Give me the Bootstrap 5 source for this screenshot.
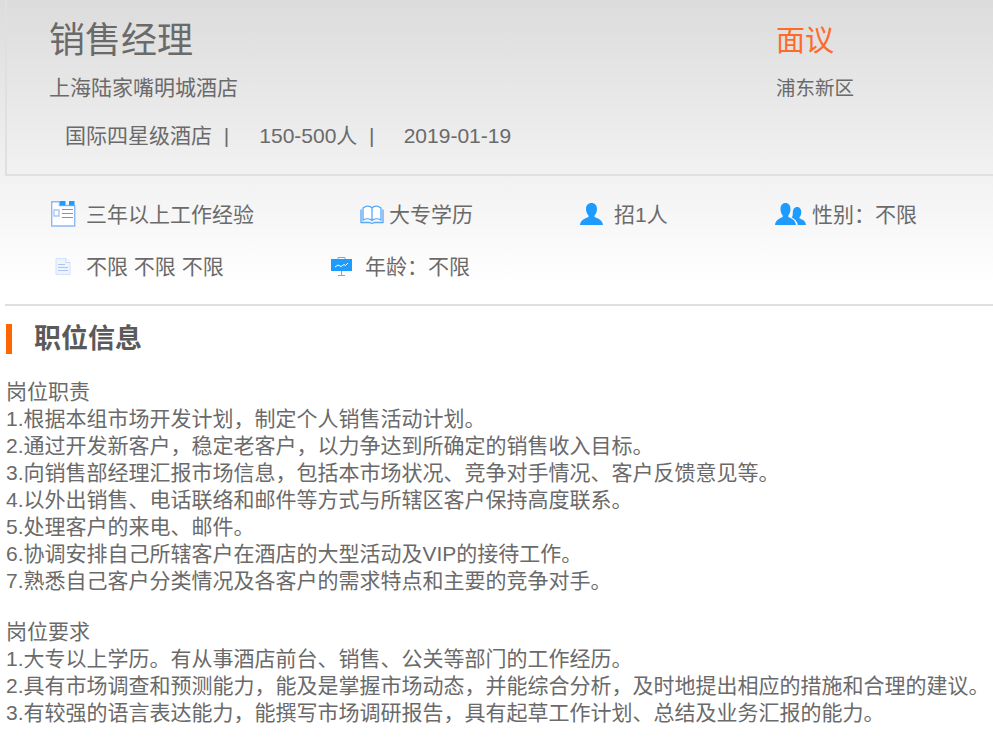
<!DOCTYPE html>
<html lang="zh-CN">
<head>
<meta charset="utf-8">
<title>销售经理</title>
<link rel="stylesheet" href="https://cdn.jsdelivr.net/npm/bootstrap@5.3.0/dist/css/bootstrap.min.css">
<style>
html,body{height:750px;overflow:hidden}
body{background:#fff;color:#6a6a6a;font-family:"Liberation Sans","Noto Sans CJK SC",sans-serif;font-size:21px;line-height:27px}
.job-page{background:linear-gradient(#dcdcdc 0,#fff 285px);height:750px;padding-left:5px}
.job-head{height:176px;border-left:2px solid #e0e0e0;border-bottom:2px solid #e0e0e0;padding-left:42px}
.head-left{width:727px}
.job-title{font-size:36px;line-height:40px;font-weight:400;margin:21px 0 0;color:#6a6a6a}
.job-sub{margin-top:13px}
.job-area{margin-top:14px;font-size:19.5px}
.job-meta{margin-top:21px;padding-left:16px;white-space:pre}
.meta-num{margin-left:1px}
.job-pay{font-size:29px;line-height:40px;color:#ff6a2b;margin-top:21px}
.facts{height:130px;border-bottom:2px solid #e0e0e0;padding:12px 0 0 46px}
.fact-row{height:52px}
.fact{white-space:nowrap}
.fact-a{width:309px}.fact-b{width:220px}.fact-c{width:195px}
.fact-e{width:280px;padding-left:4px}
.ico-a{width:36px}.ico-b{width:29px}.ico-c{width:34px}.ico-d{width:38px}.ico-e{width:32px}.ico-f{width:34px}
.fact-text{margin-left:-1px}
.sec-head{height:30px;margin-top:18px;margin-left:1px;border-left:6px solid #ff6600;padding-left:22px;font-size:27px;line-height:30px;font-weight:700;color:#5a5a5a}
.job-body{margin:24px 0 0 1px;white-space:nowrap}
.job-body p{margin:0}
.gap-line{height:24px}
</style>
</head>
<body>
<div class="job-page">
  <div class="job-head d-flex">
    <div class="head-left">
      <h1 class="job-title">销售经理</h1>
      <div class="job-sub">上海陆家嘴明城酒店</div>
      <div class="job-meta">国际四星级酒店  |     <span class="meta-num">150-500人</span>  |     2019-01-19</div>
    </div>
    <div>
      <div class="job-pay">面议</div>
      <div class="job-area">浦东新区</div>
    </div>
  </div>
  <div class="facts">
    <div class="fact-row d-flex align-items-center">
      <div class="fact fact-a d-flex align-items-center"><span class="ico-a d-flex">
        <svg width="25" height="26" viewBox="0 0 25 26"><path d="M.7.7H8.500V4.500H23.700V25H.7z" fill="#fff" stroke="#8cb9f5" stroke-width="1.400"/><path d="M9 0h5.500v4.500H9zM18 0h5.500v4.500H18z" fill="#1e9bff"/><path d="M3 9h5v6H3z" fill="#fff" stroke="#a8c8f5" stroke-width="1.400"/><path d="M11 8.500h11M11 12.500h11M11 16.500h11" stroke="#4ba3f5" stroke-width="1.200"/></svg></span><span class="fact-text">三年以上工作经验</span></div>
      <div class="fact fact-b d-flex align-items-center"><span class="ico-b d-flex">
        <svg width="24" height="19" viewBox="0 0 24 19"><path d="M3 3C6 .5 10 .5 12 3c2-2.500 6-2.500 9 0v12c-3-1.500-7-1.500-9 .5-2-2-6-2-9-.5zM12 3v12.500" fill="#fff" stroke="#5aa9f7" stroke-width="1.300"/><path d="M1 4.500V17.500h8.500l2.500 1 2.500-1H23V4.500" fill="none" stroke="#5aa9f7" stroke-width="1.300"/></svg></span>大专学历</div>
      <div class="fact fact-c d-flex align-items-center"><span class="ico-c d-flex">
        <svg width="23" height="22" viewBox="0 0 23 22"><path d="M11.500 0c3.500 0 5.500 2.500 5.500 6 0 3-1.200 5-2.500 6.500v1.500c3 1.500 8 2.500 8.500 8H0c.5-5.500 5.500-6.500 8.500-8v-1.500C7.200 11 6 9 6 6c0-3.500 2-6 5.500-6z" fill="#1e9bff"/></svg></span>招1人</div>
      <div class="fact d-flex align-items-center"><span class="ico-d d-flex">
        <svg width="31" height="22" viewBox="0 0 31 22"><path d="M10.500 0c3.200 0 5 2.500 5 6 0 3-1 5-2.200 6.500v1.500c2.800 1.500 7.200 2.500 7.700 8H0c.5-5.500 5-6.500 7.700-8v-1.500C6.500 11 5.500 9 5.500 6c0-3.500 1.800-6 5-6z" fill="#1e9bff"/><path d="M22 4c2.800 0 4.300 2 4.300 5 0 2.500-.8 4.200-1.800 5.300v1c2.400 1.300 6 2 6.500 6.700h-8.200c-.5-4-3.500-6-6-7.500 .8-1.200 1-2.800 1-4.500C17.800 6.300 19.500 4 22 4z" fill="#1e9bff"/></svg></span><span class="fact-text">性别：不限</span></div>
    </div>
    <div class="fact-row d-flex align-items-center">
      <div class="fact fact-e d-flex align-items-center"><span class="ico-e d-flex">
        <svg width="16" height="17" viewBox="0 0 16 17"><path d="M1 .5h10l4 4v12H1z" fill="#eef3fd" stroke="#d5e2fa"/><path d="M11 .5v4h4" fill="#fff" stroke="#c6d8f8"/><path d="M3 6.500h7M3 9.500h10M3 12.500h10" stroke="#a9c6f5"/></svg></span><span class="fact-text">不限 不限 不限</span></div>
      <div class="fact d-flex align-items-center"><span class="ico-f d-flex">
        <svg width="21" height="19" viewBox="0 0 21 19"><path d="M0 2h21v12H0z" fill="#1e9bff"/><path d="M7 2V.500h7V2M10.500 14v4M7 18.500h7" fill="none" stroke="#5ab0ff"/><path d="M4 10l3-2 3 1.500 3-2 1.500 1L17 6" fill="none" stroke="#fff"/></svg></span>年龄：不限</div>
    </div>
  </div>
  <div class="sec-head">职位信息</div>
  <div class="job-body">
    <p>岗位职责</p>
    <p>1.根据本组市场开发计划，制定个人销售活动计划。</p>
    <p>2.通过开发新客户，稳定老客户，以力争达到所确定的销售收入目标。</p>
    <p>3.向销售部经理汇报市场信息，包括本市场状况、竞争对手情况、客户反馈意见等。</p>
    <p>4.以外出销售、电话联络和邮件等方式与所辖区客户保持高度联系。</p>
    <p>5.处理客户的来电、邮件。</p>
    <p>6.协调安排自己所辖客户在酒店的大型活动及VIP的接待工作。</p>
    <p>7.熟悉自己客户分类情况及各客户的需求特点和主要的竞争对手。</p>
    <div class="gap-line"></div>
    <p>岗位要求</p>
    <p>1.大专以上学历。有从事酒店前台、销售、公关等部门的工作经历。</p>
    <p>2.具有市场调查和预测能力，能及是掌握市场动态，并能综合分析，及时地提出相应的措施和合理的建议。</p>
    <p>3.有较强的语言表达能力，能撰写市场调研报告，具有起草工作计划、总结及业务汇报的能力。</p>
  </div>
</div>
<script src="https://cdn.jsdelivr.net/npm/bootstrap@5.3.0/dist/js/bootstrap.bundle.min.js"></script>
</body>
</html>
